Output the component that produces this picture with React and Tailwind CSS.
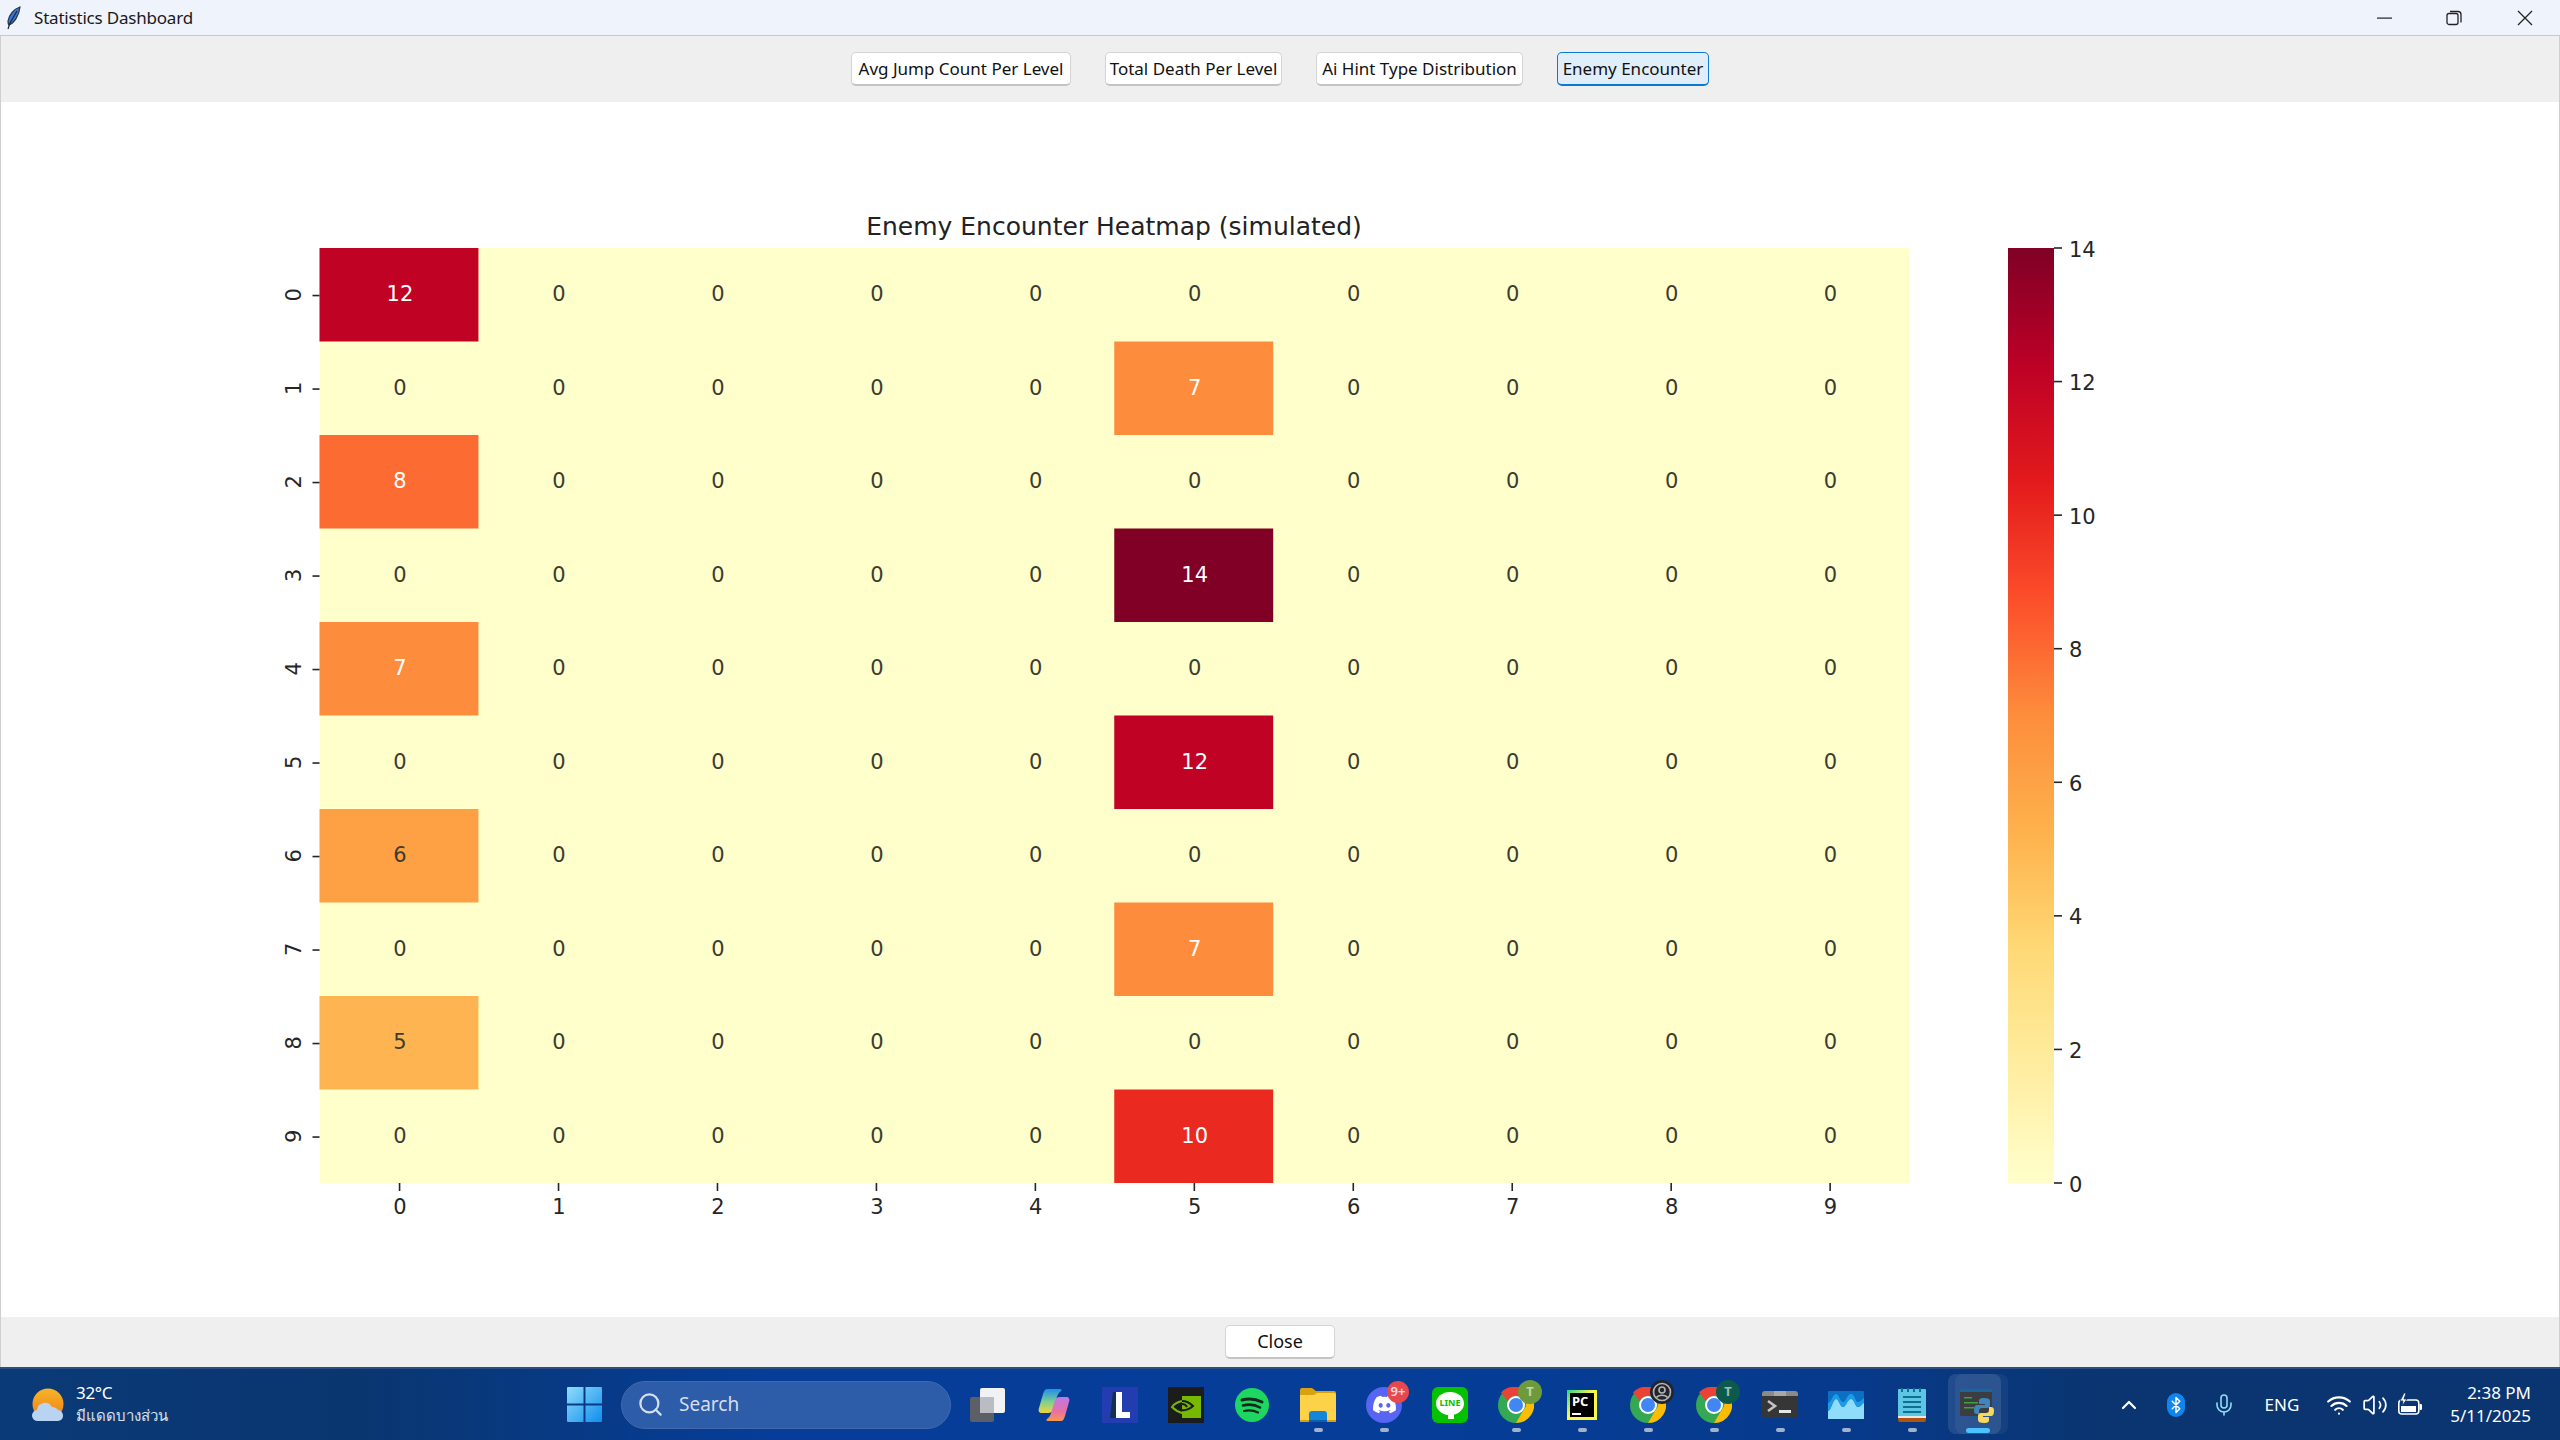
import React from 'react';
import { FaDiscord } from 'react-icons/fa';
import { Bluetooth, ChevronUp, Mic, Search, Volume2, Wifi } from 'lucide-react';

const tabs = [
    { label: 'Avg Jump Count Per Level', width: 'w-[220px]' },
    { label: 'Total Death Per Level', width: 'w-[177px]' },
    { label: 'Ai Hint Type Distribution', width: 'w-[207px]' },
    { label: 'Enemy Encounter', width: 'w-[152px]' },
];

// YlOrRd, same stops matplotlib uses
const stops = ['#ffffcc', '#ffeda0', '#fed976', '#feb24c', '#fd8d3c', '#fc4e2a', '#e31a1c', '#bd0026', '#800026'];
const cellColors = { 0: '#ffffcc', 5: '#feb551', 6: '#fea145', 7: '#fd8d3c', 8: '#fc6b32', 10: '#ea2921', 12: '#c00325', 14: '#800026' };
const hot = { '0-0': 12, '1-5': 7, '2-0': 8, '3-5': 14, '4-0': 7, '5-5': 12, '6-0': 6, '7-5': 7, '8-0': 5, '9-5': 10 };

const left = 319.5;
const top = 248;
const cellW = 158.95;
const cellH = 93.5;
const idx = [0, 1, 2, 3, 4, 5, 6, 7, 8, 9];

function Heatmap() {
    return (
        <svg width="2558" height="1215" viewBox="1 102 2558 1215" className="block font-['DejaVu_Sans',sans-serif]">
            <defs>
                <linearGradient id="ylorrd" x1="0" y1="1" x2="0" y2="0">
                    {stops.map((c, i) => <stop key={c} offset={i / 8} stopColor={c} />)}
                </linearGradient>
            </defs>
            <text x="1114" y="226.500" textAnchor="middle" dominantBaseline="central" className="text-[25px] fill-[#222]">Enemy Encounter Heatmap (simulated)</text>

            <rect x={left} y={top} width={cellW * 10} height={cellH * 10} fill="#ffffcc" />
            {idx.map((r) => idx.map((c) => {
                const v = hot[`${r}-${c}`] || 0;
                const x = left + c * cellW;
                const y = top + r * cellH;
                return (
                    <g key={`${r}-${c}`}>
                        {v > 0 && <rect x={x} y={y} width={cellW} height={cellH} fill={cellColors[v]} />}
                        <text x={x + cellW / 2 + 1} y={y + cellH / 2 - 0.5} textAnchor="middle" dominantBaseline="central" className={v >= 7 ? 'text-[21px] fill-[#fff]' : 'text-[21px] fill-[#3c3c30]'}>{v}</text>
                    </g>
                );
            }))}

            {idx.map((i) => (
                <g key={i} className="text-[21px] fill-[#262626]">
                    <rect x={left - 7} y={top + (i + 0.5) * cellH} width="7" height="1.6" fill="#262626" />
                    <text transform={`translate(294 ${top + (i + 0.5) * cellH}) rotate(-90)`} textAnchor="middle" dominantBaseline="central">{i}</text>
                    <rect x={left + (i + 0.5) * cellW - 0.2} y={top + cellH * 10} width="1.6" height="8" fill="#262626" />
                    <text x={left + (i + 0.5) * cellW + 1} y="1207" textAnchor="middle" dominantBaseline="central">{i}</text>
                </g>
            ))}

            <rect x="2008" y={top} width="46" height={cellH * 10} fill="url(#ylorrd)" />
            {[0, 2, 4, 6, 8, 10, 12, 14].map((v) => {
                const y = top + cellH * 10 - (v * cellH * 10) / 14;
                return (
                    <g key={v} className="text-[21px] fill-[#262626]">
                        <rect x="2054" y={y - 0.8} width="8" height="1.6" fill="#262626" />
                        <text x="2069" y={y + 1.5} dominantBaseline="central">{v}</text>
                    </g>
                );
            })}
        </svg>
    );
}

function Feather() {
    return (
        <svg width="16" height="24" viewBox="0 0 16 24">
            <path d="M14 1C8 3 3 9 2 15c0 2 0 3 1 4C8 17 13 10 14 1Z" fill="#3a78d8" stroke="#27354a" strokeWidth="1.2" />
            <path d="M11 5 4 17 2 23" fill="none" stroke="#1c2733" strokeWidth="1.2" />
        </svg>
    );
}

function Weather() {
    return (
        <svg width="34" height="34" viewBox="0 0 34 34">
            <defs>
                <linearGradient id="sun" x1="0" y1="0" x2="0" y2="1">
                    <stop offset="0" stopColor="#f7b52a" />
                    <stop offset="1" stopColor="#ee7d14" />
                </linearGradient>
            </defs>
            <circle cx="17" cy="16" r="15.5" fill="url(#sun)" />
            <path d="M7 33a5.500 5.500 0 0 1-1-11 8 8 0 0 1 15-3 7 7 0 0 1 6 3 5.500 5.500 0 0 1 5 6 5 5 0 0 1-5 5Z" fill="#b9d4f2" />
        </svg>
    );
}

function WinLogo() {
    return (
        <svg width="35" height="35" viewBox="0 0 35 35">
            <defs>
                <linearGradient id="win" x1="0" y1="0" x2="1" y2="1">
                    <stop offset="0" stopColor="#8fdcfb" />
                    <stop offset="1" stopColor="#0f8eee" />
                </linearGradient>
            </defs>
            <path d="M1 0h15.500v16.500H0V1a1 1 0 0 1 1-1ZM18.500 0H34a1 1 0 0 1 1 1v15.500H18.500ZM0 18.500h16.500V35H1a1 1 0 0 1-1-1ZM18.500 18.500H35V34a1 1 0 0 1-1 1H18.500Z" fill="url(#win)" />
        </svg>
    );
}

function TaskView() {
    return (
        <svg width="36" height="34" viewBox="0 0 36 34">
            <rect x="0" y="9" width="24" height="25" rx="2" fill="#5c5f66" />
            <rect x="10" y="0" width="25" height="25" rx="2" fill="#f1f2f4" />
            <rect x="10" y="9" width="14" height="16" fill="#b9bcc2" />
        </svg>
    );
}

function Copilot() {
    return (
        <svg width="34" height="34" viewBox="0 0 34 34">
            <defs>
                <linearGradient id="cpA" x1="0" y1="0" x2="0" y2="1">
                    <stop offset="0" stopColor="#1f8ff0" />
                    <stop offset="0.55" stopColor="#7fd18c" />
                    <stop offset="1" stopColor="#f4d33f" />
                </linearGradient>
                <linearGradient id="cpB" x1="0" y1="1" x2="0" y2="0">
                    <stop offset="0" stopColor="#b77be8" />
                    <stop offset="0.6" stopColor="#ec6fa4" />
                    <stop offset="1" stopColor="#f79a4c" />
                </linearGradient>
            </defs>
            <path d="M10 1h13c2 0 2 1 1 2-3 2-4 5-5 9l-3 10c-1 2-2 3-5 3H5c-3 0-4-2-3-5l4-14c1-3 2-5 4-5Z" fill="url(#cpA)" />
            <path d="M10 1h13c2 0 2 1 1 2-3 2-4 5-5 9l-3 10c-1 2-2 3-5 3H5c-3 0-4-2-3-5l4-14c1-3 2-5 4-5Z" fill="url(#cpB)" transform="rotate(180 17 17)" />
        </svg>
    );
}

function LApp() {
    return (
        <div className="w-[36px] h-[36px] bg-[#233cb0] relative flex items-center justify-center">
            <svg width="20" height="26" viewBox="0 0 20 26">
                <path d="M3 0h3v26H0Z" fill="#15304a" />
                <path d="M6 0h6v20h8v6H6Z" fill="#fff" />
            </svg>
        </div>
    );
}

function Nvidia() {
    return (
        <svg width="36" height="36" viewBox="0 0 36 36">
            <rect width="36" height="36" fill="#1c1c1c" />
            <path d="M14 9h19v22H14Z" fill="#76b900" />
            <path d="M14 14c-4 1-8 3-10 6 3 3 6 5 10 6 5 1 12 0 17-1" fill="none" stroke="#76b900" strokeWidth="2" />
            <path d="M14 14c4 0 8 2 11 5-2 2-7 5-11 4-3-1-4-2-5-3 1-2 3-3 5-3 2 0 4 1 5 3" fill="none" stroke="#1c1c1c" strokeWidth="2" />
        </svg>
    );
}

function Spotify() {
    return (
        <svg width="34" height="34" viewBox="0 0 34 34">
            <circle cx="17" cy="17" r="17" fill="#1ed760" />
            <g fill="none" stroke="#14281c" strokeLinecap="round">
                <path d="M7 12c7-2 14-1 20 2" strokeWidth="3" />
                <path d="M8 17.500c6-1.500 12-1 17 2" strokeWidth="2.600" />
                <path d="M9 23c5-1 10-.5 14 1.500" strokeWidth="2.200" />
            </g>
        </svg>
    );
}

function FolderIcon() {
    return (
        <svg width="36" height="34" viewBox="0 0 36 34">
            <path d="M0 2a2 2 0 0 1 2-2h10l4 3h18a2 2 0 0 1 2 2v8H0Z" fill="#d9a10f" />
            <path d="M0 7h14l3-2h17a2 2 0 0 1 2 2v27H0Z" fill="#fdd148" />
            <path d="M9 34v-8a3 3 0 0 1 3-3h12a3 3 0 0 1 3 3v8Z" fill="#1485d8" />
            <rect x="0" y="32" width="36" height="2" fill="#d9a10f" />
            <rect x="9" y="32" width="18" height="2" fill="#0f5fa8" />
        </svg>
    );
}

function Discord() {
    return (
        <div className="relative w-[36px] h-[36px] rounded-full bg-[#5865f2] flex items-center justify-center">
            <FaDiscord size={25} color="#fff" />
            <span className="absolute -top-[6px] -right-[7px] w-[22px] h-[22px] rounded-full bg-[#e5484d] text-white/80 text-[13px] font-semibold flex items-center justify-center">9+</span>
        </div>
    );
}

function LineApp() {
    return (
        <div className="w-[36px] h-[36px] rounded-[6px] bg-[#06c100] relative flex items-center justify-center">
            <div className="w-[28px] h-[23px] rounded-[50%] bg-white flex items-center justify-center text-[9px] font-bold text-[#06c100] mb-[3px]">LINE</div>
            <span className="absolute bottom-[4px] left-[16px] w-[6px] h-[5px] bg-white" />
        </div>
    );
}

function Chrome({ badge, badgeBg }) {
    return (
        <div className="relative w-[36px] h-[36px]">
            <svg width="36" height="36" viewBox="0 0 36 36">
                <circle cx="18" cy="18" r="18" fill="#34a853" />
                <path d="M18 0a18 18 0 0 1 15.600 9H18a9 9 0 0 0-8 5L3 5.500A18 18 0 0 1 18 0Z" fill="#ea4335" />
                <path d="M33.600 9A18 18 0 0 1 18 36l7.800-13.500A9 9 0 0 0 25 9Z" fill="#fbbc04" />
                <circle cx="18" cy="18" r="9" fill="#fff" />
                <circle cx="18" cy="18" r="7" fill="#4285f4" />
            </svg>
            {badge && <span className={`absolute -top-[7px] -right-[8px] w-[24px] h-[24px] rounded-full flex items-center justify-center text-[13px] font-bold text-white/60 ${badgeBg}`}>{badge}</span>}
        </div>
    );
}

function ProfileBadge() {
    return (
        <span className="absolute -top-[7px] left-[20px] w-[24px] h-[24px] rounded-full bg-[#22262c] flex items-center justify-center">
            <svg width="20" height="20" viewBox="0 0 20 20" fill="none" stroke="#b5b5b5" strokeWidth="1.6">
                <circle cx="10" cy="10" r="8.500" />
                <circle cx="10" cy="8" r="3" />
                <path d="M4.500 15.500c2-3 9-3 11 0" />
            </svg>
        </span>
    );
}

function PyCharm() {
    return (
        <div className="w-[30px] h-[30px] bg-[linear-gradient(135deg,#21d789,#fcf84a_45%,#fcf84a)] p-[3px]">
            <div className="w-full h-full bg-black text-white text-[13px] font-bold leading-none pt-[2px] pl-[2px]">
                PC
                <div className="w-[9px] h-[2px] bg-white mt-[5px]" />
            </div>
        </div>
    );
}

function TerminalIcon() {
    return (
        <svg width="36" height="27" viewBox="0 0 36 27">
            <rect width="36" height="27" rx="3" fill="#363636" />
            <path d="M0 3a3 3 0 0 1 3-3h30a3 3 0 0 1 3 3v2H0Z" fill="#8a8a8a" />
            <rect x="12" y="0" width="12" height="5" fill="#a8a8a8" />
            <path d="m6 10 7 5-7 5" fill="none" stroke="#c4c4c4" strokeWidth="2.600" />
            <rect x="17" y="19" width="12" height="3" fill="#e6e6e6" />
        </svg>
    );
}

function MonitorIcon() {
    return (
        <svg width="36" height="28" viewBox="0 0 36 28">
            <rect width="36" height="28" rx="1" fill="#0b6fc4" />
            <path d="M0 20c3 0 5-12 8-12s4 8 7 8 4-8 8-8 4 8 7 8 4-4 6-5v17H0Z" fill="#8fdcfb" />
            <path d="M0 12c3 0 5-9 8-9s4 8 7 8 4-8 8-8 4 8 7 8 4-3 6-4v5c-2 1-3 4-6 4s-4-8-7-8-5 8-8 8-4-8-7-8-5 12-8 12Z" fill="#1c9be8" />
        </svg>
    );
}

function NotepadIcon() {
    return (
        <svg width="28" height="34" viewBox="0 0 28 34">
            <rect y="1" width="28" height="28" rx="1" fill="#5dc6e4" />
            <path d="M0 29h28v3a2 2 0 0 1-2 2H2a2 2 0 0 1-2-2Z" fill="#b0540f" />
            <rect y="28" width="28" height="2" fill="#e8e8e8" />
            <g fill="#0f6f8f">
                <rect x="5" y="8" width="18" height="2" />
                <rect x="5" y="13" width="18" height="2" />
                <rect x="5" y="18" width="18" height="2" />
                <rect x="5" y="23" width="18" height="2" />
                <path d="M3 0h2v4H3ZM9 0h2v4H9ZM15 0h2v4h-2ZM21 0h2v4h-2Z" />
            </g>
        </svg>
    );
}

function PythonApp() {
    return (
        <svg width="36" height="36" viewBox="0 0 36 36">
            <rect x="0" y="2" width="32" height="27" fill="#3b3d40" />
            <rect x="0" y="2" width="32" height="3" fill="#16679e" />
            <g fill="#3da33d">
                <rect x="4" y="10" width="8" height="1.500" />
                <rect x="4" y="15" width="14" height="1.500" />
                <rect x="4" y="20" width="10" height="1.500" />
            </g>
            <path d="M24 11c-4 0-5 1-5 3v3h6v1h-8c-2 0-3 2-3 5s1 4 3 4h2v-3c0-2 1-3 3-3h5c2 0 3-1 3-3v-4c0-2-2-3-6-3Z" fill="#3f86bf" />
            <path d="M24 36c4 0 5-1 5-3v-3h-6v-1h8c2 0 3-2 3-5s-1-4-3-4h-2v3c0 2-1 3-3 3h-5c-2 0-3 1-3 3v4c0 2 2 3 6 3Z" fill="#f6d860" />
        </svg>
    );
}

function BatteryIcon() {
    return (
        <svg width="24" height="24" viewBox="0 0 24 24" fill="none">
            <rect x="0.800" y="7" width="20" height="14" rx="3" stroke="#fff" strokeWidth="1.600" />
            <rect x="21.500" y="11" width="2.500" height="6" rx="1" fill="#fff" />
            <path d="M3 19V13h15v6Z" fill="#fff" />
            <path d="M6 0 2 8h3l-1 5 5-7H6l2-6Z" fill="#fff" stroke="#0a3570" strokeWidth="0.800" />
        </svg>
    );
}

// one taskbar slot, 66px like the real one
function Slot({ children, dot, active }) {
    return (
        <div className="w-[66px] h-full relative flex items-center justify-center">
            {active && <span className="absolute top-[5px] left-[10px] w-[53px] h-[60px] rounded-[8px] bg-white/5" />}
            {active && <span className="absolute top-[5px] left-[3px] w-[53px] h-[60px] rounded-[8px] bg-white/10" />}
            <div className="relative">{children}</div>
            {dot && <span className="absolute top-[59px] left-[29px] w-[9px] h-[4px] rounded-full bg-[#9fb3cf]" />}
            {active && <span className="absolute top-[59px] left-[21px] w-[24px] h-[5px] rounded-full bg-[#4cc2ff]" />}
        </div>
    );
}

export default function App() {
    return (
        <div className="w-[2560px] h-[1440px] flex flex-col overflow-hidden font-['Noto_Sans',sans-serif]">
            {/* barra de titulo */}
            <div className="h-[36px] shrink-0 bg-[#eff3fb] border-b border-[#c8c8c8] flex items-center">
                <div className="ml-[6px] w-[28px] h-[24px]"><Feather /></div>
                <span className="text-[17px] text-[#1a1a1a] tracking-[-0.2px]">Statistics Dashboard</span>
                <div className="ml-auto flex items-center">
                    <svg width="16" height="16" viewBox="0 0 16 16" className="mr-[53px]"><rect y="7.500" width="15" height="1.200" fill="#222" /></svg>
                    <svg width="16" height="16" viewBox="0 0 16 16" fill="none" stroke="#222" strokeWidth="1.300" className="mr-[55px]">
                        <rect x="1" y="3.500" width="11" height="11" rx="2" />
                        <path d="M4 1.500h8a3 3 0 0 1 3 3v8" />
                    </svg>
                    <svg width="16" height="16" viewBox="0 0 16 16" stroke="#222" strokeWidth="1.300" className="mr-[27px]"><path d="M1 1l14 14M15 1 1 15" /></svg>
                </div>
            </div>

            <div className="h-[66px] shrink-0 bg-[#efefef] flex items-center justify-center gap-[34px] border-x border-[#cfcfcf]">
                {tabs.map((t, i) => (
                    <button key={t.label} className={i === 3
                        ? `${t.width} h-[34px] rounded-[5px] bg-[#e0eef9] border border-[#0f78d4] border-b-2 text-[17px] text-[#111] whitespace-nowrap`
                        : `${t.width} h-[34px] rounded-[5px] bg-white border border-[#d4d4d4] border-b-2 border-b-[#c4c4c4] text-[17px] text-[#111] whitespace-nowrap`}>
                        {t.label}
                    </button>
                ))}
            </div>

            <div className="flex-1 bg-white border-x border-[#cfcfcf] min-h-0">
                <Heatmap />
            </div>

            <div className="h-[50px] shrink-0 bg-[#efefef] border-x border-[#cfcfcf] flex items-center justify-center">
                <button className="w-[110px] h-[34px] rounded-[5px] bg-white border border-[#d4d4d4] border-b-2 border-b-[#c4c4c4] text-[18px] text-[#111]">Close</button>
            </div>

            {/* taskbar */}
            <div className="h-[73px] shrink-0 border-t-2 border-[#2c4f80] flex items-center bg-[linear-gradient(90deg,#0a3a78_0%,#0a3670_14%,#053d98_30%,#053d98_55%,#073a8c_72%,#0a3570_82%,#0a3570_100%)] text-white">
                <div className="w-[551px] h-full pl-[31px] flex items-center gap-[11px]">
                    <Weather />
                    <div className="leading-none -mt-[3px]">
                        <div className="text-[17px] tracking-[-0.3px] mb-[7px]">32°C</div>
                        <div className="text-[15px] text-white/85 font-['Noto_Sans','DejaVu_Sans',sans-serif]">มีแดดบางส่วน</div>
                    </div>
                </div>

                <div className="flex items-center h-full">
                    <Slot><WinLogo /></Slot>
                    <div className="w-[330px] h-[48px] ml-[4px] mr-[4px] rounded-full bg-[#2d5ca8] border border-[#4269ae] flex items-center pl-[15px] gap-[15px] text-[#d6deea]">
                        <Search size={27} strokeWidth={2} />
                        <span className="text-[19px]">Search</span>
                    </div>
                    <Slot><TaskView /></Slot>
                    <Slot><Copilot /></Slot>
                    <Slot><LApp /></Slot>
                    <Slot><Nvidia /></Slot>
                    <Slot><Spotify /></Slot>
                    <Slot dot><FolderIcon /></Slot>
                    <Slot dot><Discord /></Slot>
                    <Slot><LineApp /></Slot>
                    <Slot dot><Chrome badge="T" badgeBg="bg-[#6f9a3c]" /></Slot>
                    <Slot dot><PyCharm /></Slot>
                    <Slot dot><div className="relative"><Chrome /><ProfileBadge /></div></Slot>
                    <Slot dot><Chrome badge="T" badgeBg="bg-[#0d5a4c]" /></Slot>
                    <Slot dot><TerminalIcon /></Slot>
                    <Slot dot><MonitorIcon /></Slot>
                    <Slot dot><NotepadIcon /></Slot>
                    <Slot active><PythonApp /></Slot>
                </div>

                <div className="flex-1 h-full flex items-center justify-end pr-[29px]">
                    <ChevronUp size={24} strokeWidth={2.2} className="mr-[26px]" />
                    <div className="w-[18px] h-[24px] rounded-[9px] bg-[#0f85ee] flex items-center justify-center mr-[27px]">
                        <Bluetooth size={18} strokeWidth={2} />
                    </div>
                    <Mic size={24} strokeWidth={1.6} color="#8fdcf5" className="mr-[29px]" />
                    <span className="text-[17px] mr-[27px]">ENG</span>
                    <Wifi size={26} strokeWidth={2} className="mr-[10px]" />
                    <Volume2 size={26} strokeWidth={1.6} className="mr-[10px]" />
                    <BatteryIcon />
                    <div className="ml-[28px] text-right text-[17px] leading-[23px] -mt-[1px]">
                        <div>2:38 PM</div>
                        <div>5/11/2025</div>
                    </div>
                </div>
            </div>
        </div>
    );
}
